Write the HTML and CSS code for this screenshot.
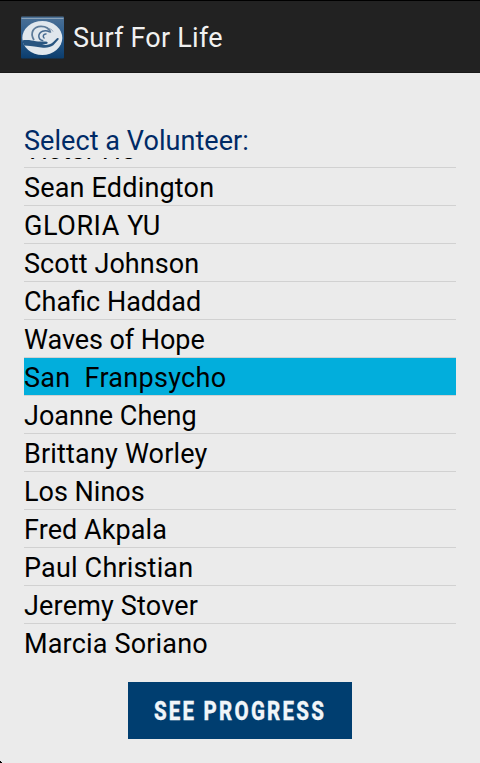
FILE: index.html
```html
<!DOCTYPE html>
<html lang="en">
<head>
<meta charset="utf-8">
<title>Surf For Life</title>
<link rel="stylesheet" href="styles.css">
</head>
<body>
<header class="bar">
  <svg class="logo" viewBox="0 0 43 43" aria-hidden="true">
    <defs>
      <linearGradient id="sea" x1="0" y1="0" x2="0" y2="1">
        <stop offset="0" stop-color="#4c7196"/><stop offset=".5" stop-color="#2a5b8c"/><stop offset="1" stop-color="#0b3d6d"/>
      </linearGradient>
    </defs>
    <rect width="43" height="42" y=".5" rx="1" fill="url(#sea)"/>
    <path d="M.5 2.500h42" stroke="#8ba2b8" stroke-width="1"/>
    <ellipse cx="21.300" cy="22" rx="20" ry="17" fill="#e0e7ed"/>
    <path d="M1 24.500c5-1 10 0 14 .7 4 .6 8-.2 11 .6 1.500.8.5 2-1 2.200l-4 .5c4 1 8 .3 11-2.200l4-4c1.500-1 2.200.2 1.300 1.500l-5 5.500c-3 2.300-7 2.700-12 2.200-5-.6-8-1.500-17-2Z" fill="#285580"/>
    <path d="M13 24C8.500 17 12.500 10.300 20 10.300c5 0 8.500 2.500 9.500 6.500" fill="none" stroke="#5d7b99" stroke-width="1.800"/>
    <path d="M28.500 16c-4.500-3-10.500-.5-10.700 4 0 2.500 1.700 4.300 4.500 4.800M25.500 18c-3-.5-4.500 2.500-2 4.500" fill="none" stroke="#456a90" stroke-width="1.500"/>
    <path d="M28 12.500l2.500 1 1.500 2" fill="none" stroke="#7891aa" stroke-width=".8"/>
  </svg>
  <h1 class="title">Surf For Life</h1>
</header>
<main class="content">
  <h2 class="prompt">Select a Volunteer:</h2>
  <ul class="list">
    <li><span>Victor Ho</span></li>
    <li class="loose"><span>Sean Eddington</span></li>
    <li class="widest"><span>GLORIA YU</span></li>
    <li class="slight"><span>Scott Johnson</span></li>
    <li><span>Chafic Haddad</span></li>
    <li class="tight"><span>Waves of Hope</span></li>
    <li class="selected"><span>San&nbsp; Franpsycho</span></li>
    <li><span>Joanne Cheng</span></li>
    <li class="loose"><span>Brittany Worley</span></li>
    <li><span>Los Ninos</span></li>
    <li class="slight"><span>Fred Akpala</span></li>
    <li class="loose"><span>Paul Christian</span></li>
    <li class="loose"><span>Jeremy Stover</span></li>
    <li class="loose"><span>Marcia Soriano</span></li>
  </ul>
  <button class="progress"><span>SEE PROGRESS</span></button>
</main>
<i class="corner"></i>
</body>
</html>
```

FILE: styles.css
```css
* { box-sizing: border-box; }
body {
  margin: 0;
  height: 763px;
  overflow: hidden;
  background: #ebebeb;
  font-family: Roboto, "Liberation Sans", sans-serif;
  color: #000;
}
.bar {
  display: flex;
  align-items: center;
  height: 73px;
  padding: 2px 0 0 21px;
  background: #222;
  border-top: 1px solid #000;
  border-bottom: 1px solid #191919;
}
.logo { width: 43px; height: 43px; margin-right: 9px; }
.title {
  margin: 0;
  font-size: 27px;
  font-weight: 400;
  line-height: 36px;
  letter-spacing: .23px;
  color: #f1f1f1;
}
.content {
  display: flex;
  flex-direction: column;
  padding: 49px 24px 0;
}
.prompt {
  height: 36px;
  margin: 0;
  font-size: 27px;
  font-weight: 400;
  line-height: 38px;
  letter-spacing: .06px;
  color: #002a66;
}
.list {
  display: flex;
  flex-direction: column;
  justify-content: flex-end;
  height: 503px;
  margin: 0;
  padding: 0;
  overflow: hidden;
  list-style: none;
}
.list li {
  flex: none;
  height: 38px;
  border-bottom: 1px solid #d1d1d1;
  font-size: 27px;
  line-height: 41px;
  white-space: nowrap;
}
.list li:last-child { height: 37px; border-bottom: 0; }
.list .tight { letter-spacing: -.06px; }
.list .slight { letter-spacing: .08px; }
.list .loose { letter-spacing: .18px; }
.list .widest { letter-spacing: .58px; }
.list .selected { background: #02aedc; letter-spacing: .3px; }
.progress {
  align-self: center;
  width: 224px;
  height: 57px;
  margin-top: 21px;
  padding: 0;
  border: 0;
  background: #003e70;
  color: #f0f5f9;
  font: 800 25px/58px Roboto, sans-serif;
  letter-spacing: 2.7px;
  white-space: nowrap;
}
.progress span {
  display: inline-block;
  margin: 0 -20px;
  transform: translateY(1px) scaleX(.82);
  -webkit-text-stroke: .3px #f0f5f9;
}
.corner {
  position: absolute;
  left: 0;
  bottom: 0;
  width: 2px;
  height: 2px;
  background: #000;
  clip-path: polygon(0 0, 50% 0, 50% 50%, 100% 50%, 100% 100%, 0 100%);
}
```
